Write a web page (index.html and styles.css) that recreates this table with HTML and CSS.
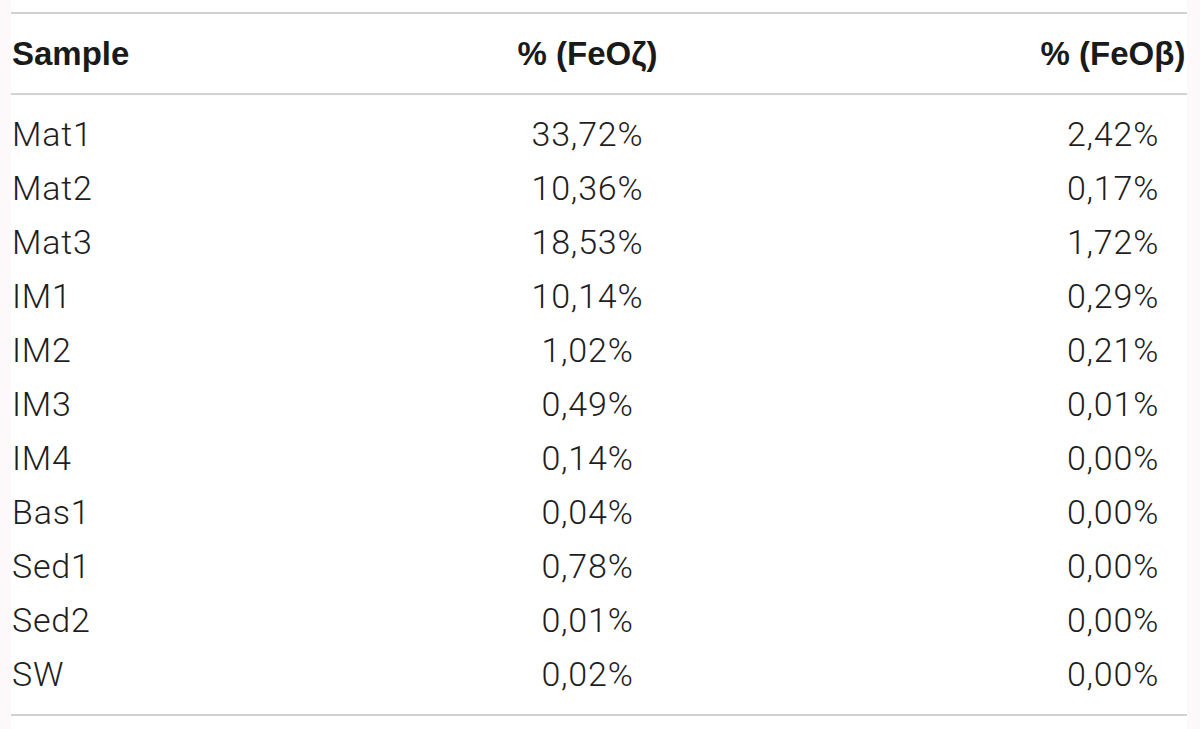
FILE: index.html
```html
<!DOCTYPE html>
<html>
<head>
<meta charset="utf-8">
<link rel="stylesheet" href="styles.css">
</head>
<body>
<div class="sheet">
  <div class="table">
    <div class="row head">
      <div class="c1">Sample</div>
      <div class="c2">% (FeOζ)</div>
      <div class="c3">% (FeOβ)</div>
    </div>
    <div class="body">
      <div class="row"><div class="c1">Mat1</div><div class="c2">33,72%</div><div class="c3">2,42%</div></div>
      <div class="row"><div class="c1">Mat2</div><div class="c2">10,36%</div><div class="c3">0,17%</div></div>
      <div class="row"><div class="c1">Mat3</div><div class="c2">18,53%</div><div class="c3">1,72%</div></div>
      <div class="row"><div class="c1">IM1</div><div class="c2">10,14%</div><div class="c3">0,29%</div></div>
      <div class="row"><div class="c1">IM2</div><div class="c2">1,02%</div><div class="c3">0,21%</div></div>
      <div class="row"><div class="c1">IM3</div><div class="c2">0,49%</div><div class="c3">0,01%</div></div>
      <div class="row"><div class="c1">IM4</div><div class="c2">0,14%</div><div class="c3">0,00%</div></div>
      <div class="row"><div class="c1">Bas1</div><div class="c2">0,04%</div><div class="c3">0,00%</div></div>
      <div class="row"><div class="c1">Sed1</div><div class="c2">0,78%</div><div class="c3">0,00%</div></div>
      <div class="row"><div class="c1">Sed2</div><div class="c2">0,01%</div><div class="c3">0,00%</div></div>
      <div class="row"><div class="c1">SW</div><div class="c2">0,02%</div><div class="c3">0,00%</div></div>
    </div>
  </div>
</div>
</body>
</html>
```
FILE: styles.css
```css
html, body {
  margin: 0;
  padding: 0;
  background: #fdf9fa;
}
body {
  font-family: "Liberation Sans", Arial, sans-serif;
  color: #222;
}
.sheet {
  margin: 0 13px 0 11px;
  background: #fff;
  height: 729px;
  padding-top: 12px;
  box-sizing: border-box;
}
.table {
  border-top: 2px solid #d2d2d2;
  border-bottom: 2px solid #d2d2d2;
}
.row {
  display: grid;
  grid-template-columns: 125px 1fr 148px;
  height: 54px;
  align-items: center;
  line-height: 1;
}
.row.head {
  height: 79px;
  font-size: 33px;
  font-weight: bold;
  color: #1a1a1a;
  border-bottom: 2px solid #d2d2d2;
}
.body {
  padding: 12px 0 13px;
}
.body .row {
  font-family: Roboto, "Liberation Sans", sans-serif;
  font-weight: 300;
  font-size: 34px;
  letter-spacing: 0.8px;
  color: #1e1e1e;
}
.c1 {
  padding-left: 1px;
}
.c2, .c3 {
  text-align: center;
  white-space: nowrap;
}
```
